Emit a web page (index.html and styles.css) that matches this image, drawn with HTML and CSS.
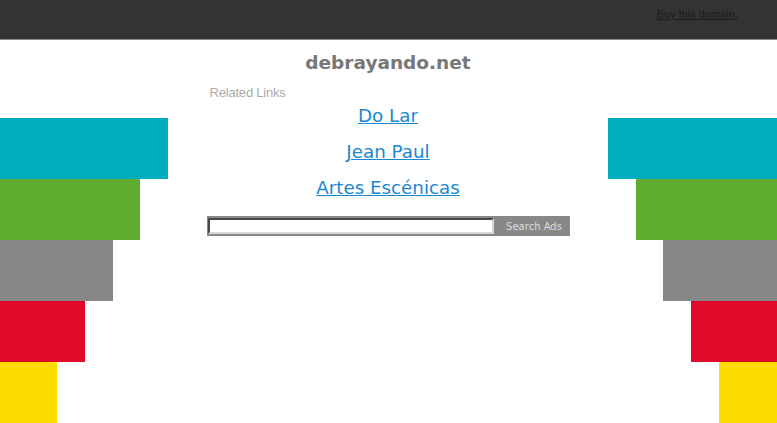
FILE: index.html
```html
<!DOCTYPE html>
<html lang="en">
<head>
    <meta charset="UTF-8">
    <title>debrayando.net</title>
    <link rel="stylesheet" href="styles.css">
</head>
<body>

<div class="topbar">
    <a href="#" class="buy">Buy this domain.</a>
</div>

<div class="main">
    <!-- left stripes -->
    <div class="stripes left">
        <div class="bar cyan" style="width: 168px"></div>
        <div class="bar green" style="width: 140px"></div>
        <div class="bar gray" style="width: 113px"></div>
        <div class="bar red" style="width: 85px"></div>
        <div class="bar yellow" style="width: 57px"></div>
    </div>

    <div class="content">
        <h1>debrayando.net</h1>
        <div class="inner">
            <div class="related">Related Links</div>
            <div class="links">
                <a href="#">Do Lar</a>
                <a href="#">Jean Paul</a>
                <a href="#">Artes Escénicas</a>
            </div>
            <form class="search" onsubmit="return false">
                <input type="text" class="search-input">
                <button class="search-btn">Search Ads</button>
            </form>
        </div>
    </div>

    <!-- right stripes -->
    <div class="stripes right">
        <div class="bar cyan" style="width: 169px"></div>
        <div class="bar green" style="width: 141px"></div>
        <div class="bar gray" style="width: 114px"></div>
        <div class="bar red" style="width: 86px"></div>
        <div class="bar yellow" style="width: 58px"></div>
    </div>
</div>

</body>
</html>
```

FILE: styles.css
```css
* {
    margin: 0;
    padding: 0;
    box-sizing: border-box;
}

body {
    font-family: 'DejaVu Sans', Verdana, sans-serif;
    background: #fff;
    height: 100vh;
    overflow: hidden;
}

.topbar {
    height: 40px;
    background: #333;
    border-bottom: 1px solid #8a8a8a;
    display: flex;
    justify-content: flex-end;
    padding: 8px 39px 0 0;
}

.buy {
    font-family: 'Liberation Sans', Arial, sans-serif;
    font-size: 11px;
    line-height: 13px;
    color: #1c1c1c;
}

.main {
    display: grid;
    grid-template-columns: 168px 1fr 169px;
}

.stripes {
    display: flex;
    flex-direction: column;
    padding-top: 78px;
}

.stripes.left {
    align-items: flex-start;
}

.stripes.right {
    align-items: flex-end;
}

.bar {
    height: 61px;
}

.cyan { background: #00adbf; }
.green { background: #5fac31; }
.gray { background: #878787; }
.red { background: #e00b2a; }
.yellow { background: #ffdc00; }

.content {
    display: flex;
    flex-direction: column;
    align-items: center;
    padding-top: 11px;
}

h1 {
    font-size: 18.5px;
    line-height: 24px;
    color: #777;
    font-weight: bold;
    margin-bottom: 8px;
}

.inner {
    width: 363px;
    display: flex;
    flex-direction: column;
}

.related {
    font-family: 'Liberation Sans', Arial, sans-serif;
    font-size: 13px;
    line-height: 20px;
    color: #aaa;
    padding-left: 3px;
    letter-spacing: -0.2px;
}

.links {
    display: flex;
    flex-direction: column;
    align-items: center;
    gap: 12px;
    margin-top: 1px;
}

.links a {
    font-size: 18.3px;
    line-height: 24px;
    color: #1a87d1;
}

.search {
    margin-top: 16px;
    background: #888;
    height: 20px;
    display: flex;
    align-items: center;
    padding: 0 1px;
}

.search-input {
    width: 286px;
    height: 16px;
    border: 2px solid;
    border-color: #4a4a4a #d8d8d8 #d8d8d8 #4a4a4a;
    background: #fff;
}

.search-btn {
    flex: 1;
    background: none;
    border: none;
    color: #ddd;
    font-family: 'DejaVu Sans', Verdana, sans-serif;
    font-size: 10px;
    padding-left: 6px;
    cursor: pointer;
}
```
